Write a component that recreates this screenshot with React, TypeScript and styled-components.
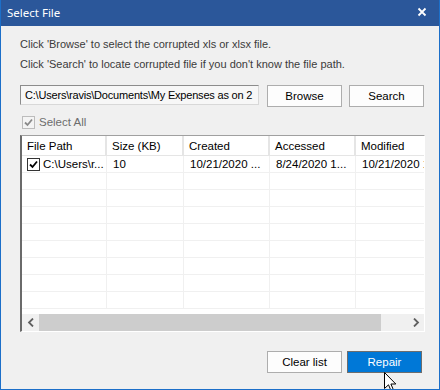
import * as React from "react";
import styled, {createGlobalStyle} from "styled-components";

const GlobalStyle = createGlobalStyle`
	html, body {
		margin: 0;
		padding: 0;
		background: #f0f0f0;
	}
	* {
		box-sizing: border-box;
	}
`

const COLUMNS = [
	{title: "File Path", width: 85},
	{title: "Size (KB)", width: 77},
	{title: "Created", width: 86},
	{title: "Accessed", width: 86},
	{title: "Modified", width: 86},
]

const FILES = [
	{path: "C:\\Users\\ravis\\Documents\\My Expenses.xlsx", size: "10", created: "10/21/2020 ...", accessed: "8/24/2020 1...", modified: "10/21/2020 1"},
]

const EMPTY_ROWS = 8

const SelectFileDialog = () => {

	return (
		<Window>

			<TitleBar>
				<span>Select File</span>
				<CloseIcon width="10" height="10" viewBox="0 0 10 10">
					<path d="M1.5 1.5 L8.5 8.5 M8.5 1.5 L1.5 8.5" stroke="#fff" strokeWidth="1.8" />
				</CloseIcon>
			</TitleBar>

			<Body>

				<Hint>Click 'Browse' to select the corrupted xls or xlsx file.</Hint>
				<Hint>Click 'Search' to locate corrupted file if you don't know the file path.</Hint>

				<PathRow>
					<PathInput>C:\Users\ravis\Documents\My Expenses as on 2</PathInput>
					<Button>Browse</Button>
					<Button>Search</Button>
				</PathRow>

				<SelectAll>
					<CheckBox $disabled>
						<CheckMark color="#8a8a8a" />
					</CheckBox>
					<span>Select All</span>
				</SelectAll>

				<Grid>
					<GridBody>
						<Row $header>
							{COLUMNS.map(col => (
								<Cell key={col.title} $width={col.width} $header>{col.title}</Cell>
							))}
						</Row>

						{FILES.map(file => (
							<Row key={file.path}>
								<Cell $width={COLUMNS[0].width}>
									<CheckBox>
										<CheckMark color="#000" />
									</CheckBox>
									<span>C:\Users\r...</span>
								</Cell>
								<Cell $width={COLUMNS[1].width}>{file.size}</Cell>
								<Cell $width={COLUMNS[2].width}>{file.created}</Cell>
								<Cell $width={COLUMNS[3].width}>{file.accessed}</Cell>
								<Cell $width={COLUMNS[4].width}>{file.modified}</Cell>
							</Row>
						))}

						{Array.from({length: EMPTY_ROWS}).map((_, i) => (
							<Row key={i}>
								{COLUMNS.map(col => <Cell key={col.title} $width={col.width} />)}
							</Row>
						))}
					</GridBody>

					<ScrollBar>
						<ScrollArrow>
							<svg width="8" height="9" viewBox="0 0 8 9"><path d="M6 0.5 L2 4.5 L6 8.5" stroke="#606060" strokeWidth="1.8" fill="none" /></svg>
						</ScrollArrow>
						<ScrollTrack>
							<ScrollThumb style={{width: "342px"}} />
						</ScrollTrack>
						<ScrollArrow>
							<svg width="8" height="9" viewBox="0 0 8 9"><path d="M2 0.5 L6 4.5 L2 8.5" stroke="#606060" strokeWidth="1.8" fill="none" /></svg>
						</ScrollArrow>
					</ScrollBar>
				</Grid>

				<Footer>
					<Button>Clear list</Button>
					<Button $primary>Repair</Button>
				</Footer>

			</Body>

			<Cursor width="14" height="22" viewBox="0 0 14 22">
				<path d="M0.5 0.5 L0.5 16.5 L4.5 12.8 L7.3 19.3 L9.6 18.3 L6.9 12 L11.8 12 Z" fill="#fff" stroke="#000" strokeWidth="1" />
			</Cursor>

		</Window>
	)
}

const CheckMark = ({color}: {color: string}) => (
	<svg width="9" height="9" viewBox="0 0 9 9">
		<path d="M1 4.5 L3.5 7 L8 1.5" stroke={color} strokeWidth="1.8" fill="none" />
	</svg>
)

const Window = styled.div`
	position: relative;
	width: 440px;
	height: 390px;
	overflow: hidden;
	display: flex;
	flex-direction: column;
	background: #f0f0f0;
	border: 1px solid #1c6fc9;
	border-top: none;
	font-family: "Liberation Sans", Arial, sans-serif;
	font-size: 11px;
	color: #000;
`

const TitleBar = styled.div`
	height: 26px;
	flex: none;
	display: flex;
	align-items: center;
	justify-content: space-between;
	padding: 0 13px 2px 7px;
	margin: 0 -1px;
	background: #2b579a;
	color: #fff;
	font-family: "Noto Sans", sans-serif;
	font-size: 11.5px;
`

const CloseIcon = styled.svg`
	display: block;
`

const Body = styled.div`
	display: flex;
	flex-direction: column;
	padding: 8px 15px 0 19px;
`

const Hint = styled.div`
	line-height: 20px;
	color: #3b3b3b;
`

const PathInput = styled.div`
	width: 239px;
	height: 20px;
	margin-right: 1px;
	padding: 0 4px;
	line-height: 18px;
	border: 1px solid #8c8c8c;
	border-right-color: #d8d8d8;
	border-bottom-color: #d8d8d8;
	background: #f7f7f7;
	white-space: nowrap;
	overflow: hidden;
	font-size: 11px;
	letter-spacing: -0.2px;
`

const PathRow = styled.div`
	display: flex;
	align-items: flex-start;
	gap: 7px;
	margin-top: 11px;
`

const Button = styled.div<{$primary?: boolean}>`
	width: 75px;
	height: 22px;
	display: flex;
	align-items: center;
	justify-content: center;
	border: 1px solid ${props => props.$primary ? "#6d6d6d" : "#adadad"};
	background: ${props => props.$primary ? "#0078d7" : "#fdfdfd"};
	color: ${props => props.$primary ? "#fff" : "#000"};
	font-size: 11.5px;
`

const SelectAll = styled.div`
	display: flex;
	align-items: center;
	gap: 4px;
	height: 18px;
	margin-top: 6px;
	padding-left: 2px;
	color: #6d6d6d;
	font-size: 11.5px;
`

const CheckBox = styled.div<{$disabled?: boolean}>`
	width: 13px;
	height: 13px;
	flex: none;
	display: flex;
	align-items: center;
	justify-content: center;
	border: 1px solid ${props => props.$disabled ? "#bcbcbc" : "#333"};
	background: ${props => props.$disabled ? "#f4f4f4" : "#fff"};
`

const Grid = styled.div`
	margin-top: 4px;
	width: 405px;
	height: 197px;
	display: flex;
	flex-direction: column;
	border-top: 1px solid #a0a0a0;
	border-left: 2px solid #6a6a6a;
	border-right: 1px solid #fff;
	border-bottom: 1px solid #fff;
	background: #fff;
`

const GridBody = styled.div`
	flex: 1;
	overflow: hidden;
`

const Row = styled.div<{$header?: boolean}>`
	display: flex;
	height: ${props => props.$header ? "20px" : "17px"};
	border-bottom: 1px solid ${props => props.$header ? "#e5e5e5" : "#f0f0f0"};
	white-space: nowrap;
	font-size: 11.5px;
`

const Cell = styled.div<{$width: number, $header?: boolean}>`
	flex: none;
	width: ${props => props.$width}px;
	display: flex;
	align-items: center;
	gap: 3px;
	padding-left: ${props => props.$header ? "5px" : "6px"};
	border-right: ${props => props.$header ? "2px solid #e5e5e5" : "1px solid #f0f0f0"};
	overflow: hidden;
	& > ${CheckBox} {
		margin-left: -1px;
	}
`

const ScrollBar = styled.div`
	flex: none;
	height: 17px;
	display: flex;
	background: #f0f0f0;
`

const ScrollArrow = styled.div`
	width: 17px;
	flex: none;
	display: flex;
	align-items: center;
	justify-content: center;
`

const ScrollTrack = styled.div`
	flex: 1;
`

const ScrollThumb = styled.div`
	height: 100%;
	background: #cdcdcd;
`

const Footer = styled.div`
	display: flex;
	justify-content: flex-end;
	gap: 5px;
	margin-top: 19px;
	padding-right: 2px;
`

const Cursor = styled.svg`
	position: absolute;
	left: 383px;
	top: 372px;
`

const App = () => {
	return (
		<>
			<GlobalStyle />
			<SelectFileDialog />
		</>
	)
}

export default App;
